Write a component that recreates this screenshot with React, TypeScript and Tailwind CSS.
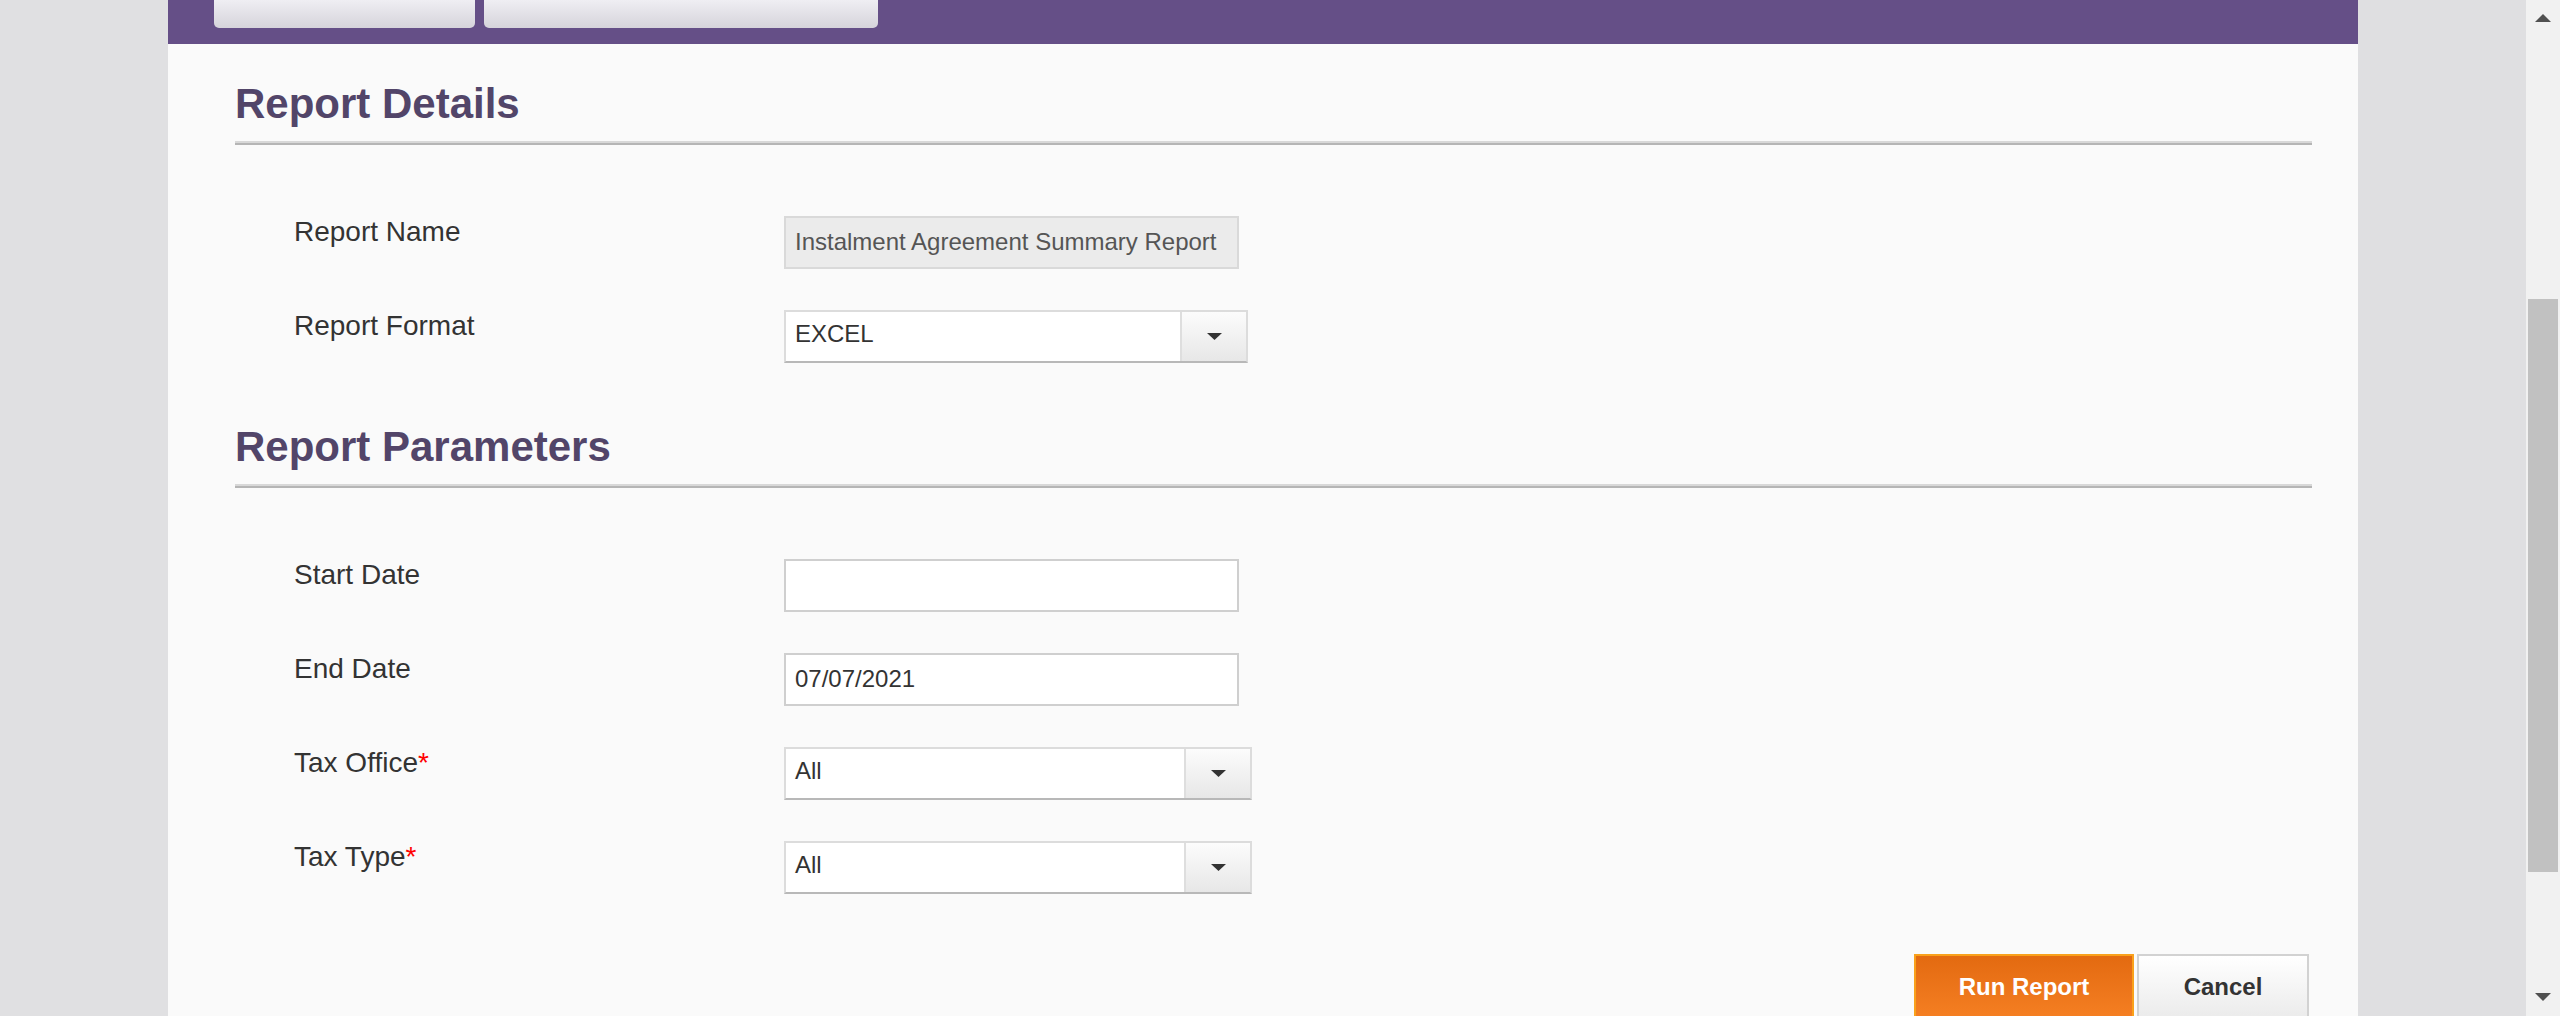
import type { ReactNode } from 'react'

function Caret() {
  return (
    <svg width="15" height="7" viewBox="0 0 15 7" className="block">
      <polygon points="0,0 15,0 7.5,7" fill="#333333" />
    </svg>
  )
}

interface RowProps {
  label: string
  required?: boolean
  children: ReactNode
}

function Row({ label, required, children }: RowProps) {
  return (
    <div className="flex items-start h-[53px]">
      <div className="w-[549px] pl-[59px] text-[28px] leading-[32px] text-[#333333]">
        {label}
        {required && <span className="text-[#ff0000]">*</span>}
      </div>
      {children}
    </div>
  )
}

function TextBox({ value = '', disabled = false }: { value?: string; disabled?: boolean }) {
  return (
    <div
      className={`w-[455px] h-[53px] border-2 flex items-center pl-[9px] pb-[1px] text-[24px] leading-[28px] ${
        disabled
          ? 'bg-[#ebebeb] border-[#d9d9d9] text-[#555555]'
          : 'bg-white border-[#cfcfcf] text-[#333333]'
      }`}
    >
      {value}
    </div>
  )
}

function SelectBox({ value, wide = false }: { value: string; wide?: boolean }) {
  return (
    <div
      className={`flex h-[53px] border-2 border-[#dcdcdc] border-b-[#b8b8b8] bg-white ${
        wide ? 'w-[468px]' : 'w-[464px]'
      }`}
    >
      <div className="flex-1 flex items-center pl-[9px] pb-[5px] text-[24px] leading-[28px] text-[#333333]">
        {value}
      </div>
      <div className="w-[66px] flex items-center justify-center border-l-2 border-[#dedede] bg-linear-to-b from-[#fcfcfc] to-[#e7e7e7]">
        <Caret />
      </div>
    </div>
  )
}

function SectionHeading({ title }: { title: string }) {
  return (
    <div>
      <h2 className="text-[42px] leading-[48px] font-bold text-[#524569]">{title}</h2>
      <div className="mt-[13px] mr-[3px]">
        <div className="h-[2px] bg-[#d8d8d8]" />
        <div className="h-[2px] bg-[#b5b5b5]" />
      </div>
    </div>
  )
}

export default function App() {
  return (
    <div className="flex w-[2560px] h-[1016px] overflow-hidden font-['Liberation_Sans',Arial,sans-serif]">
      {/* side gutter */}
      <div className="w-[168px] shrink-0 bg-[#e0e0e2]" />

      <div className="w-[2190px] shrink-0 bg-[#fafafa] flex flex-col">
        {/* top nav */}
        <div className="h-[44px] shrink-0 bg-[#654f87] flex items-start pl-[46px] gap-[9px]">
          <div className="w-[261px] h-[28px] rounded-b-[5px] bg-linear-to-b from-[#efeef3] to-[#d6d4db]" />
          <div className="w-[394px] h-[28px] rounded-b-[5px] bg-linear-to-b from-[#efeef3] to-[#d6d4db]" />
        </div>

        <div className="shrink-0 pl-[67px] pr-[43px] pt-[36px]">
          <SectionHeading title="Report Details" />

          <div className="mt-[71px] flex flex-col gap-[41px]">
            <Row label="Report Name">
              <TextBox value="Instalment Agreement Summary Report" disabled />
            </Row>
            <Row label="Report Format">
              <SelectBox value="EXCEL" />
            </Row>
          </div>

          <div className="mt-[60px]">
            <SectionHeading title="Report Parameters" />
          </div>

          <div className="mt-[71px] flex flex-col gap-[41px]">
            <Row label="Start Date">
              <TextBox />
            </Row>
            <Row label="End Date">
              <TextBox value="07/07/2021" />
            </Row>
            <Row label="Tax Office" required>
              <SelectBox value="All" wide />
            </Row>
            <Row label="Tax Type" required>
              <SelectBox value="All" wide />
            </Row>
          </div>

          <div className="mt-[60px] flex justify-end gap-[3px] mr-[6px]">
            <button className="w-[220px] h-[66px] border-2 border-[#f9a11b] bg-linear-to-b from-[#e36a10] to-[#f57f22] text-white text-[24px] font-bold">
              Run Report
            </button>
            <button className="w-[172px] h-[66px] border-2 border-[#d2d2d2] bg-linear-to-b from-white to-[#ebebeb] text-[#333333] text-[24px] font-bold">
              Cancel
            </button>
          </div>
        </div>
      </div>

      <div className="w-[168px] shrink-0 bg-[#dfdfe1]" />

      {/* scrollbar */}
      <div className="w-[34px] shrink-0 bg-[#f1f1f1] flex flex-col items-center">
        <svg width="16" height="8" viewBox="0 0 16 8" className="mt-[14px] block shrink-0">
          <polygon points="8,0 16,8 0,8" fill="#505050" />
        </svg>
        <div className="mt-[277px] w-[30px] h-[573px] shrink-0 bg-[#c1c1c1]" />
        <div className="flex-1" />
        <svg width="16" height="8" viewBox="0 0 16 8" className="mb-[15px] block shrink-0">
          <polygon points="0,0 16,0 8,8" fill="#505050" />
        </svg>
      </div>
    </div>
  )
}
